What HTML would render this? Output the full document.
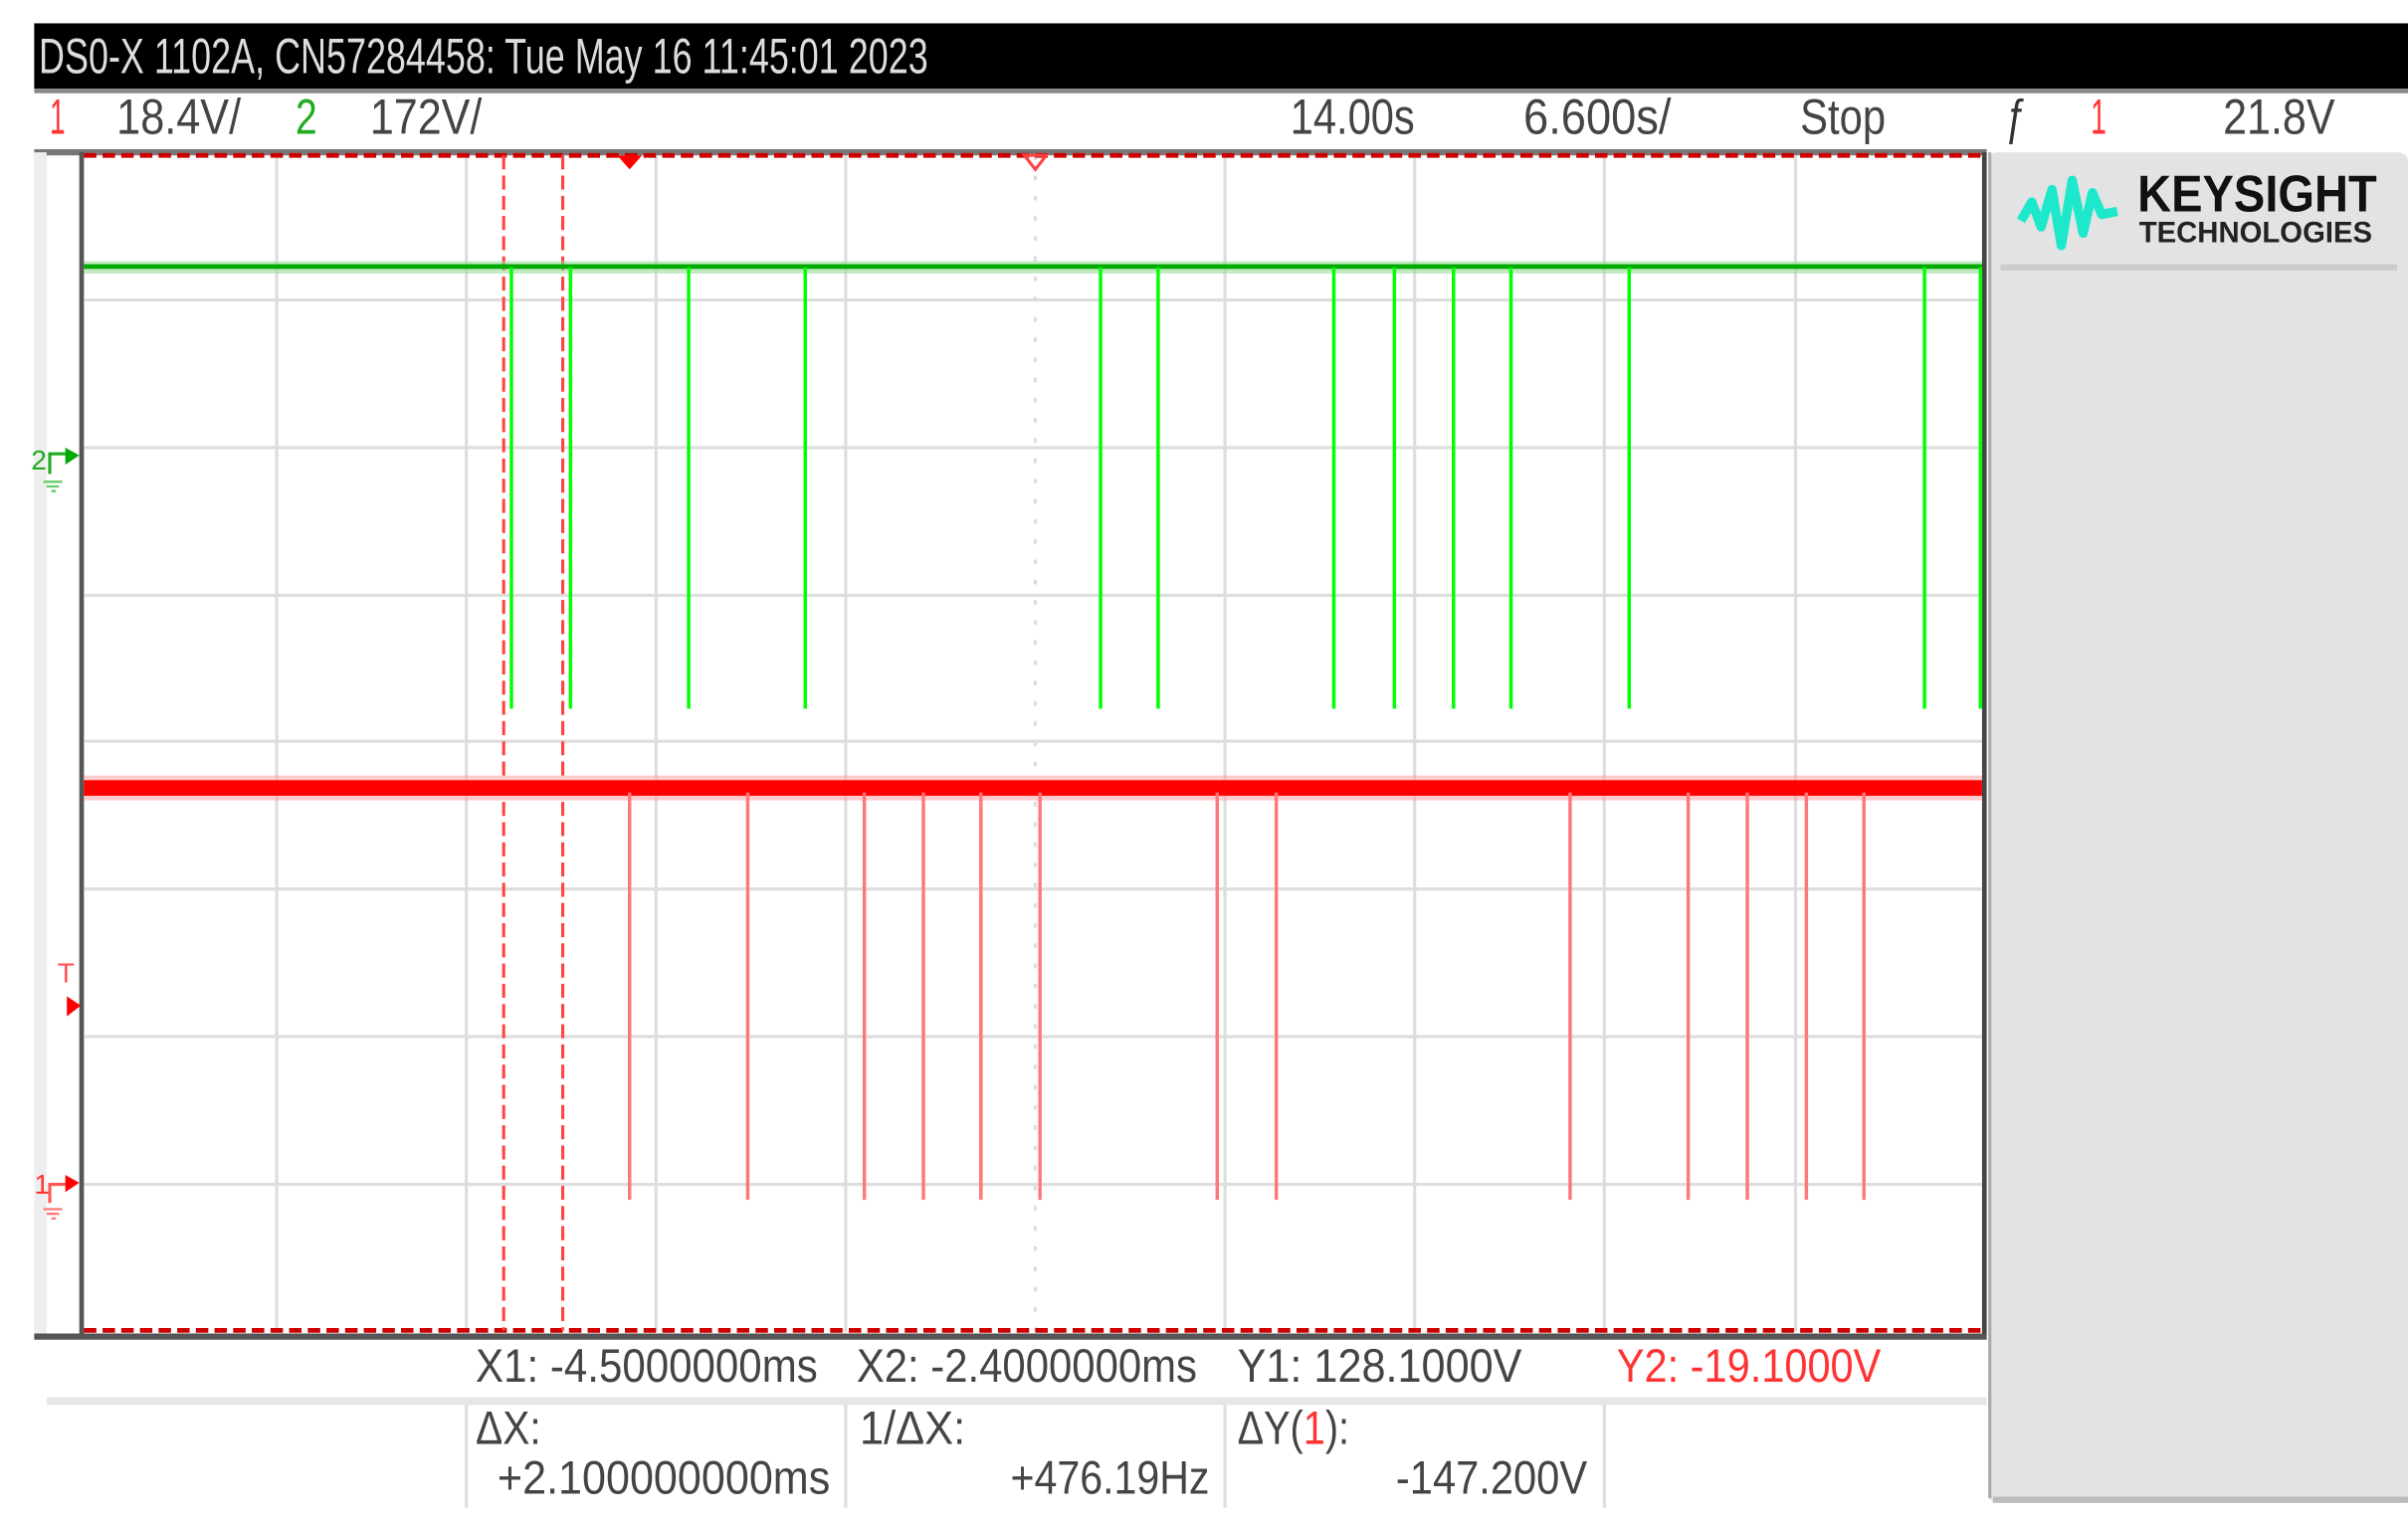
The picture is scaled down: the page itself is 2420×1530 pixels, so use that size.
<!DOCTYPE html>
<html><head><meta charset="utf-8"><style>
html,body{margin:0;padding:0;background:#fff;width:2420px;height:1530px;overflow:hidden}
svg{display:block}
text{font-family:"Liberation Sans",sans-serif}
</style></head><body>
<svg width="2420" height="1530" viewBox="0 0 1549 979.3" preserveAspectRatio="none" xmlns="http://www.w3.org/2000/svg">
<rect width="1549" height="980" fill="#fff"/>
<!-- header -->
<rect x="22" y="15" width="1527" height="42" fill="#000"/>
<rect x="22" y="57" width="1527" height="3" fill="#888"/>
<text x="25" y="47" font-size="32" fill="#ddd" textLength="572" lengthAdjust="spacingAndGlyphs">DS0-X 1102A, CN57284458: Tue May 16 11:45:01 2023</text>
<!-- status row -->
<g font-size="32">
<text x="32" y="86" fill="#f33" textLength="10" lengthAdjust="spacingAndGlyphs">1</text>
<text x="75" y="86" fill="#444" textLength="80" lengthAdjust="spacingAndGlyphs">18.4V/</text>
<text x="190" y="86" fill="#2a2" textLength="14" lengthAdjust="spacingAndGlyphs">2</text>
<text x="238" y="86" fill="#444" textLength="72" lengthAdjust="spacingAndGlyphs">172V/</text>
<text x="830" y="86" fill="#444" textLength="80" lengthAdjust="spacingAndGlyphs">14.00s</text>
<text x="980" y="86" fill="#444" textLength="95" lengthAdjust="spacingAndGlyphs">6.600s/</text>
<text x="1158" y="86" fill="#444" textLength="55" lengthAdjust="spacingAndGlyphs">Stop</text>
<text x="1290" y="86" fill="#333" textLength="14" lengthAdjust="spacingAndGlyphs">ƒ</text>
<text x="1345" y="86" fill="#f33" textLength="10" lengthAdjust="spacingAndGlyphs">1</text>
<text x="1430" y="86" fill="#444" textLength="72" lengthAdjust="spacingAndGlyphs">21.8V</text>
</g>
<!-- plot frame -->
<rect x="22" y="96" width="1256" height="4" fill="#777"/>
<rect x="22" y="98" width="8" height="760" fill="#eee"/>
<rect x="51" y="98" width="3" height="762" fill="#555"/>
<rect x="1275" y="98" width="3" height="762" fill="#444"/>
<!-- grid -->
<g stroke="#ddd" stroke-width="2">
<line x1="178" y1="100" x2="178" y2="857"/><line x1="300" y1="100" x2="300" y2="857"/>
<line x1="422" y1="100" x2="422" y2="857"/><line x1="544" y1="100" x2="544" y2="857"/>
<line x1="788" y1="100" x2="788" y2="857"/><line x1="910" y1="100" x2="910" y2="857"/>
<line x1="1032" y1="100" x2="1032" y2="857"/><line x1="1155" y1="100" x2="1155" y2="857"/>
<line x1="54" y1="193" x2="1275" y2="193"/><line x1="54" y1="288" x2="1275" y2="288"/>
<line x1="54" y1="383" x2="1275" y2="383"/><line x1="54" y1="477" x2="1275" y2="477"/>
<line x1="54" y1="572" x2="1275" y2="572"/><line x1="54" y1="667" x2="1275" y2="667"/>
<line x1="54" y1="762" x2="1275" y2="762"/>
<line x1="666" y1="100" x2="666" y2="857" stroke-dasharray="3 10"/>
</g>
<!-- red dashed border -->
<g stroke="#c00" stroke-width="3" stroke-dasharray="8 4">
<line x1="54" y1="100" x2="1275" y2="100"/><line x1="54" y1="856" x2="1275" y2="856"/>
</g>
<rect x="22" y="858" width="1256" height="4" fill="#555"/>
<!-- cursors -->
<g stroke="#f44" stroke-width="2" stroke-dasharray="9 4">
<line x1="324" y1="100" x2="324" y2="856"/><line x1="362" y1="100" x2="362" y2="856"/>
</g>
<polygon points="397,100 413,100 405,109" fill="#f00"/>
<polygon points="659,100 673,100 666,109" fill="none" stroke="#f44" stroke-width="2"/>
<!-- green trace -->
<rect x="54" y="168" width="1221" height="8" fill="#9d9" opacity="0.6"/>
<rect x="54" y="170" width="1221" height="3" fill="#0a0"/>
<g stroke="#0f0" stroke-width="2.2">
<line x1="329" y1="172" x2="329" y2="456"/><line x1="367" y1="172" x2="367" y2="456"/>
<line x1="443" y1="172" x2="443" y2="456"/><line x1="518" y1="172" x2="518" y2="456"/>
<line x1="708" y1="172" x2="708" y2="456"/><line x1="745" y1="172" x2="745" y2="456"/>
<line x1="858" y1="172" x2="858" y2="456"/><line x1="897" y1="172" x2="897" y2="456"/>
<line x1="935" y1="172" x2="935" y2="456"/><line x1="972" y1="172" x2="972" y2="456"/>
<line x1="1048" y1="172" x2="1048" y2="456"/><line x1="1238" y1="172" x2="1238" y2="456"/>
<line x1="1274" y1="172" x2="1274" y2="456"/>
</g>
<!-- red trace -->
<rect x="54" y="499" width="1221" height="16" fill="#f99" opacity="0.5"/>
<rect x="54" y="502" width="1221" height="10" fill="#f00"/>
<g stroke="#f77" stroke-width="2.2">
<line x1="405" y1="510" x2="405" y2="772"/><line x1="481" y1="510" x2="481" y2="772"/>
<line x1="556" y1="510" x2="556" y2="772"/><line x1="594" y1="510" x2="594" y2="772"/>
<line x1="631" y1="510" x2="631" y2="772"/><line x1="669" y1="510" x2="669" y2="772"/>
<line x1="783" y1="510" x2="783" y2="772"/><line x1="821" y1="510" x2="821" y2="772"/>
<line x1="1010" y1="510" x2="1010" y2="772"/><line x1="1086" y1="510" x2="1086" y2="772"/>
<line x1="1124" y1="510" x2="1124" y2="772"/><line x1="1162" y1="510" x2="1162" y2="772"/>
<line x1="1199" y1="510" x2="1199" y2="772"/>
</g>
<!-- left markers -->
<text x="20" y="302" font-size="18" fill="#2a2">2</text>
<path d="M32 305 V292 H42" stroke="#2a2" stroke-width="2" fill="none"/>
<polygon points="42,288 51,293 42,299" fill="#0a0"/>
<path d="M28 310 H40 M30 313 H38 M33 316 H36" stroke="#6c6" stroke-width="1.5"/>
<text x="37" y="632" font-size="18" fill="#f55">T</text>
<polygon points="43,641 52,647 43,654" fill="#f00"/>
<text x="22" y="768" font-size="18" fill="#f33">1</text>
<path d="M32 774 V762 H42" stroke="#f55" stroke-width="2" fill="none"/>
<polygon points="42,756 51,761 42,767" fill="#f00"/>
<path d="M28 778 H40 M30 781 H38 M33 784 H36" stroke="#f77" stroke-width="1.5"/>
<!-- right panel -->
<rect x="1279" y="98" width="270" height="869" rx="6" fill="#e3e3e3"/>
<rect x="1279" y="98" width="2" height="866" fill="#aaa"/>
<rect x="1282" y="963" width="267" height="4" fill="#bbb"/>
<rect x="1287" y="170" width="255" height="4" fill="#ccc"/>
<path d="M1300 142 L1307 130 L1313 146 L1320 122 L1326 158 L1333 116 L1340 150 L1346 124 L1352 138 L1362 136" stroke="#1ee8cc" stroke-width="6" fill="none" stroke-linejoin="round"/>
<text x="1375" y="136" font-size="33" font-weight="bold" fill="#111" textLength="154" lengthAdjust="spacingAndGlyphs">KEYSIGHT</text>
<text x="1376" y="156" font-size="19" font-weight="bold" fill="#222" textLength="150" lengthAdjust="spacingAndGlyphs">TECHNOLOGIES</text>
<!-- bottom measurements -->
<g font-size="30" fill="#444">
<text x="306" y="889" textLength="220" lengthAdjust="spacingAndGlyphs">X1: -4.5000000ms</text>
<text x="551" y="889" textLength="219" lengthAdjust="spacingAndGlyphs">X2: -2.4000000ms</text>
<text x="796" y="889" textLength="183" lengthAdjust="spacingAndGlyphs">Y1: 128.1000V</text>
<text x="1040" y="889" fill="#f33" textLength="170" lengthAdjust="spacingAndGlyphs">Y2: -19.1000V</text>
<text x="306" y="929" textLength="42" lengthAdjust="spacingAndGlyphs">ΔX:</text>
<text x="320" y="961" textLength="214" lengthAdjust="spacingAndGlyphs">+2.100000000ms</text>
<text x="553" y="929" textLength="68" lengthAdjust="spacingAndGlyphs">1/ΔX:</text>
<text x="650" y="961" textLength="128" lengthAdjust="spacingAndGlyphs">+476.19Hz</text>
<text x="796" y="929" textLength="72" lengthAdjust="spacingAndGlyphs">ΔY(<tspan fill="#f33">1</tspan>):</text>
<text x="898" y="961" textLength="123" lengthAdjust="spacingAndGlyphs">-147.200V</text>
</g>
<rect x="30" y="899" width="1248" height="5" fill="#e6e6e6"/>
<g stroke="#ddd" stroke-width="2">
<line x1="300" y1="904" x2="300" y2="970"/><line x1="544" y1="904" x2="544" y2="970"/>
<line x1="788" y1="904" x2="788" y2="970"/><line x1="1032" y1="904" x2="1032" y2="970"/>
</g>
</svg>
</body></html>
